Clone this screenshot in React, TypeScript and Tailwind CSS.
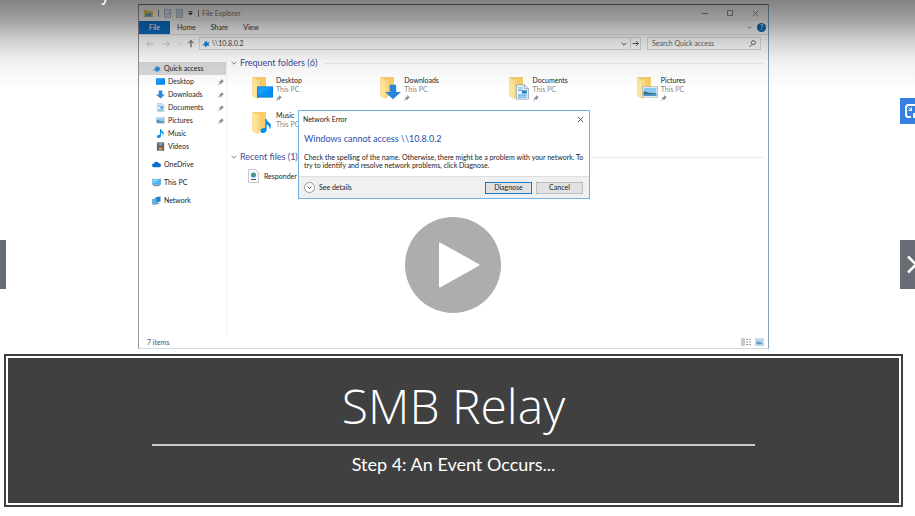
import React from "react";

type Kind = "star" | "desktop" | "downloads" | "documents" | "pictures" | "music" | "videos" | "onedrive" | "pc" | "network";

function Glyph({ kind, className }: { kind: Kind; className: string }) {
  return (
    <svg viewBox="0 0 20 20" className={className} aria-hidden="true">
      {kind === "star" && <path d="M11 1l2 5 6-1-3 5 3 5-6-1-4 5-2-5-7-1 6-4 0-5 4 1z" fill="#1f8be0" />}
      {kind === "desktop" && (
        <>
          <rect x="0" y="3" width="20" height="14" fill="#0a7bd8" />
          <path d="M1 4h18L1 15z" fill="#18a0ff" />
          <path d="M19 4v12H1v-1z" fill="#0990f5" />
        </>
      )}
      {kind === "downloads" && <path d="M6 1h8v9h6L10 19 0 10h6z" fill="#2a86da" />}
      {kind === "documents" && (
        <>
          <path d="M3 1h10l5 5v13H3z" fill="#eef6fc" stroke="#8aa0b2" />
          <path d="M13 1v5h5" fill="none" stroke="#8aa0b2" />
          <path d="M5 5h6M5 8h6M5 14h11M5 16.500h11" stroke="#55a7dc" strokeWidth="1.500" />
          <rect x="10" y="8" width="6" height="4" fill="#2983c2" />
        </>
      )}
      {kind === "pictures" && (
        <>
          <rect x="0.500" y="3.500" width="19" height="13" fill="#f4f8fb" stroke="#a3b2bf" />
          <rect x="2" y="5" width="16" height="10" fill="#8cc8f2" />
          <path d="M2 9l7 2 9 1v1H2z" fill="#3b6d65" />
          <path d="M2 12.500h16V15H2z" fill="#4b94cd" />
        </>
      )}
      {kind === "music" && (
        <path d="M9 0h2c0 5 7 5 6 11-.5 2-1.500 3-2 4 .5-4-1-6-4-7v7c0 3-2 5-5 5-2 0-4-1-4-3 0-3 4-5 7-4z" fill="#078eea" />
      )}
      {kind === "videos" && (
        <>
          <rect x="2" y="1" width="16" height="18" fill="#43464d" />
          <path d="M6 2h8v7H6z" fill="#8b98aa" />
          <path d="M6 11h8v7H6z" fill="#c98c4b" />
          <path d="M4 2v16M16 2v16" stroke="#ccd0d5" strokeWidth="1.500" strokeDasharray="2 2" />
        </>
      )}
      {kind === "onedrive" && <path d="M4 16a4 4 0 0 1 0-8 6 6 0 0 1 11-1 4.500 4.500 0 0 1 1 9z" fill="#0870c8" />}
      {kind === "pc" && (
        <>
          <rect x="0.500" y="2.500" width="19" height="12" fill="#48b5f1" stroke="#5583a5" />
          <path d="M1 3h16L1 12z" fill="#8bd3f8" />
          <path d="M3 17h14" stroke="#56798f" strokeWidth="2" />
        </>
      )}
      {kind === "network" && (
        <>
          <path d="M8 3l11-2v11L8 15z" fill="#2583c9" />
          <path d="M1 8l10-3v10L1 18z" fill="#58b4ea" stroke="#2872aa" />
          <path d="M4 19l12-3" stroke="#477aa0" strokeWidth="2" />
        </>
      )}
    </svg>
  );
}

function Pin() {
  return (
    <svg viewBox="0 0 12 12" className="h-[6px] w-[6px] shrink-0" aria-hidden="true">
      <path d="M7 0l5 5-2 .5-2 2-.5 3L5 8.500.5 12 0 11.500 3.500 7 1.500 5l3-.5 2-2z" fill="#87919b" />
    </svg>
  );
}

function Chevron({ className }: { className: string }) {
  return (
    <svg viewBox="0 0 10 6" className={className} fill="none" stroke="currentColor" strokeWidth="1.500" aria-hidden="true">
      <path d="M1 1l4 4 4-4" />
    </svg>
  );
}

function Arrow({ className }: { className: string }) {
  return (
    <svg viewBox="0 0 12 12" className={className} fill="none" stroke="currentColor" strokeWidth="1.500" aria-hidden="true">
      <path d="M1 6h10M7 2l4 4-4 4" />
    </svg>
  );
}

const places: { name: string; kind: Kind; pinned?: boolean }[] = [
  { name: "Desktop", kind: "desktop", pinned: true },
  { name: "Downloads", kind: "downloads", pinned: true },
  { name: "Documents", kind: "documents", pinned: true },
  { name: "Pictures", kind: "pictures", pinned: true },
  { name: "Music", kind: "music" },
  { name: "Videos", kind: "videos" },
];

const roots: { name: string; kind: Kind }[] = [
  { name: "OneDrive", kind: "onedrive" },
  { name: "This PC", kind: "pc" },
  { name: "Network", kind: "network" },
];

function Sidebar() {
  return (
    <nav className="w-[88px] shrink-0 border-r border-[#f4f4f4] pt-[10px]">
      <button className="flex h-[13px] w-full items-center gap-[3px] bg-[#d9d9d9] pl-[14px]">
        <Glyph kind="star" className="h-2 w-2" />
        Quick access
      </button>
      {places.map((p) => (
        <button key={p.name} className="flex h-[13px] w-full items-center gap-[3px] pr-[2px] pl-[17px]">
          <Glyph kind={p.kind} className="h-[9px] w-[9px]" />
          <span className="flex-1 text-left">{p.name}</span>
          {p.pinned && <Pin />}
        </button>
      ))}
      <div className="pt-[2px]">
        {roots.map((r) => (
          <button key={r.name} className="flex h-[18px] w-full items-center gap-[3px] pl-[13px]">
            <Glyph kind={r.kind} className="h-[9px] w-[9px]" />
            {r.name}
          </button>
        ))}
      </div>
    </nav>
  );
}

function FolderIcon({ kind }: { kind: Kind }) {
  return (
    <span className="relative h-6 w-[22px] shrink-0">
      <svg viewBox="0 0 22 24" className="h-6 w-[22px]" aria-hidden="true">
        <path d="M1 1h14v19H1z" fill="#f7cd6c" />
        <path d="M1 1l5 3v19l-5-3z" fill="#ffe39b" />
        <path d="M6 4h3v17l-3 2z" fill="#f9d980" />
      </svg>
      <span className="absolute right-0 bottom-0 flex">
        <Glyph kind={kind} className={kind === "music" ? "h-[18px] w-[14px]" : "h-4 w-4"} />
      </span>
    </span>
  );
}

function Section({ title }: { title: string }) {
  return (
    <h2 className="flex h-3 items-center gap-[3px] pr-1 pl-1 text-[9px] leading-3 text-[#3a4d99]">
      <Chevron className="h-[4px] w-[6px] text-[#777]" />
      {title}
      <span className="ml-1 h-px flex-1 bg-[#ececec]" />
    </h2>
  );
}

function ErrorDialog() {
  return (
    <section
      role="dialog"
      aria-label="Network Error"
      className="absolute top-[105px] left-[159px] w-[292px] border border-[#71b2e5] bg-white text-[#222]"
    >
      <div className="flex h-4 items-center justify-between pr-[5px] pl-1">
        <span>Network Error</span>
        <button aria-label="Close">
          <svg viewBox="0 0 8 8" className="h-[7px] w-[7px]" stroke="#444">
            <path d="M1 1l6 6M7 1L1 7" />
          </svg>
        </button>
      </div>
      <h3 className="mt-[6px] pl-[5px] text-[9px] leading-3 text-[#1f4fae]">Windows cannot access \\10.8.0.2</h3>
      <p className="mt-[8px] h-[23px] px-[5px] leading-[8px] whitespace-nowrap">
        Check the spelling of the name. Otherwise, there might be a problem with your network. To
        <br />
        try to identify and resolve network problems, click Diagnose.
      </p>
      <div className="flex h-[22px] items-center gap-1 border-t border-[#dfdfdf] bg-[#f0f0f0] pr-[6px] pl-[5px]">
        <button className="mr-auto flex items-center gap-[4px]">
          <span className="flex h-[11px] w-[11px] items-center justify-center rounded-full border border-[#999] bg-white">
            <Chevron className="h-[3px] w-[5px]" />
          </span>
          See details
        </button>
        <button className="h-3 w-[47px] border border-[#1878ce] bg-[#e1e1e1] leading-[9px]">Diagnose</button>
        <button className="h-3 w-[47px] border border-[#bdbdbd] bg-[#e1e1e1] leading-[9px]">Cancel</button>
      </div>
    </section>
  );
}

function Explorer() {
  return (
    <div className="relative mx-auto w-[70.2%] border border-t-[#777] border-r-[#86a5bd] border-b-[#d5dde4] border-l-[#929297] bg-white font-['Lato','Noto_Sans',sans-serif] text-[7px] leading-[9px] text-[#222]">
      <header className="flex h-4 items-center gap-[5px] bg-[#fafafa] pr-[9px] pl-[5px]">
        <svg viewBox="0 0 10 10" className="h-[9px] w-[9px]" aria-hidden="true">
          <path d="M0 1h4l1 1h5v7H0z" fill="#efca5c" />
          <path d="M2 5h6v4H6V7H4v2H2z" fill="#3d9fd8" />
        </svg>
        <span className="h-[7px] w-px bg-[#888]" />
        <svg viewBox="0 0 8 10" className="h-[9px] w-[7px]" fill="#e6ebf5" stroke="#a3b3d0" aria-hidden="true">
          <path d="M.5.5h7v9h-7z" />
          <path d="M2 5l2 2 3-4" fill="none" />
        </svg>
        <span className="h-[9px] w-[7px] border border-[#b9c4d8] bg-[#ced7e7]" />
        <svg viewBox="0 0 6 6" className="h-[5px] w-[5px]" aria-hidden="true">
          <path d="M1 0h4v1H1zM0 2h6L3 5z" fill="#333" />
        </svg>
        <span className="h-[7px] w-px bg-[#888]" />
        <span className="-ml-[2px] text-[#777]">File Explorer</span>
        <div className="ml-auto flex items-center gap-[19px] text-[#888]">
          <button aria-label="Minimize" className="h-px w-[6px] bg-[#888]" />
          <button aria-label="Maximize" className="h-[6px] w-[6px] border border-[#999]" />
          <button aria-label="Close window">
            <svg viewBox="0 0 8 8" className="h-[7px] w-[7px]" stroke="currentColor">
              <path d="M1 1l6 6M7 1L1 7" />
            </svg>
          </button>
        </div>
      </header>
      <div className="flex h-[13px] items-center bg-white text-[#333]">
        <button className="h-[13px] w-[31px] bg-[#0b70c9] text-white">File</button>
        <button className="w-[33px]">Home</button>
        <button className="w-[33px]">Share</button>
        <button className="w-[30px]">View</button>
        <Chevron className="ml-auto h-[3px] w-[5px] text-[#777]" />
        <button aria-label="Help" className="mx-[2px] ml-[5px] h-[9px] w-[9px] rounded-full bg-[#0b6fc4] text-center leading-[9px] text-white">?</button>
      </div>
      <div className="flex h-[18px] items-center border-t border-[#e2e2e2] pr-[7px] pl-[7px] text-[#444]">
        <Arrow className="h-2 w-2 rotate-180 text-[#ccc]" />
        <Arrow className="ml-[8px] h-2 w-2 text-[#ccc]" />
        <Chevron className="ml-[8px] h-[3px] w-[4px] text-[#bbb]" />
        <Arrow className="ml-[5px] h-2 w-2 -rotate-90" />
        <div className="ml-[4px] flex h-[13px] flex-1 items-center border border-[#dcdcdc] pl-[2px]">
          <Glyph kind="star" className="h-2 w-2" />
          <input aria-label="Address" defaultValue="\\10.8.0.2" className="ml-[2px] min-w-0 flex-1 bg-transparent outline-none" />
          <Chevron className="mr-[3px] h-[4px] w-[6px]" />
          <span className="flex h-[11px] items-center border-l border-[#dcdcdc] px-[1px]">
            <Arrow className="h-[7px] w-[7px]" />
          </span>
        </div>
        <div className="ml-[6px] flex h-[13px] w-[114px] items-center border border-[#dcdcdc] pr-[4px] pl-1">
          <input aria-label="Search" placeholder="Search Quick access" className="min-w-0 flex-1 bg-transparent outline-none placeholder:text-[#666]" />
          <svg viewBox="0 0 8 8" className="h-[7px] w-[7px]" fill="none" stroke="#555" aria-hidden="true">
            <circle cx="5" cy="3" r="2.300" />
            <path d="M3.500 5L.5 8" />
          </svg>
        </div>
      </div>
      <div className="flex min-h-[284px]">
        <Sidebar />
        <main className="min-w-0 flex-1 pt-[5px]">
          <Section title="Frequent folders (6)" />
          <div className="grid grid-cols-4 pt-[7px] pr-1 pl-6">
            {(["Desktop", "Downloads", "Documents", "Pictures", "Music"] as const).map((name) => (
              <button key={name} className="flex h-[35px] items-start gap-[3px] text-left">
                <FolderIcon kind={name.toLowerCase() as Kind} />
                <span className="flex flex-col">
                  <span>{name}</span>
                  <span className="text-[#888]">This PC</span>
                  {name !== "Music" && (
                    <span className="pt-[1px]">
                      <Pin />
                    </span>
                  )}
                </span>
              </button>
            ))}
          </div>
          <div className="pt-[5px]">
            <Section title="Recent files (1)" />
          </div>
          <button className="mt-[6px] ml-[21px] flex items-center gap-[5px]">
            <svg viewBox="0 0 11 14" className="h-[14px] w-[11px]" aria-hidden="true">
              <path d="M.5.500h7l3 3v10H.5z" fill="#fafafa" stroke="#c8c8c8" />
              <circle cx="5.500" cy="6" r="2.500" fill="#2388b5" />
              <path d="M4 5l2-1 1 2-2 2z" fill="#51a66d" />
              <path d="M3 10.500h5" stroke="#555" />
            </svg>
            Responder
          </button>
        </main>
      </div>
      <footer className="flex h-3 items-center pr-1 pl-[8px] text-[#4c5573]">
        7 items
        <svg viewBox="0 0 10 8" className="ml-auto h-[8px] w-[10px]" stroke="#999" aria-hidden="true">
          <path d="M1 0v8M3 0v8M5 1.500h2M8 1.500h2M5 4h2M8 4h2M5 6.500h2M8 6.500h2" />
        </svg>
        <span className="ml-[4px] flex h-[8px] w-[9px] items-center justify-center bg-[#c9dcec]">
          <Glyph kind="pictures" className="h-[7px] w-[7px]" />
        </span>
      </footer>
      <ErrorDialog />
    </div>
  );
}

export default function App() {
  return (
    <div className="relative min-h-screen overflow-hidden bg-white">
      <article className="relative pt-1 pr-3 pl-1">
        <Explorer />
        <div className="mt-[5px] border-2 border-[#404040] bg-white p-[2px]">
          <div className="flex h-[145px] flex-col items-center bg-[#404040] text-white">
            <h1 className="flex h-[86px] items-end pb-[2px] font-['Open_Sans','Noto_Sans',sans-serif] text-[48px] leading-[72px] font-light">SMB Relay</h1>
            <div className="h-[2px] w-[67.7%] bg-[#c5cbc6]" />
            <p className="mt-[6px] font-['Lato',sans-serif] text-[18px] leading-6">Step 4: An Event Occurs...</p>
          </div>
        </div>
        <button
          aria-label="Play video"
          className="absolute top-[217px] left-[405px] flex h-24 w-24 items-center justify-center rounded-full bg-[#adadad]"
        >
          <svg viewBox="0 0 96 96" className="h-24 w-24">
            <path d="M35 26.500v43L73.500 48z" fill="white" stroke="white" strokeWidth="2" strokeLinejoin="round" />
          </svg>
        </button>
      </article>
      <div className="pointer-events-none absolute inset-x-0 top-0 h-[90px] bg-[linear-gradient(to_bottom,rgba(0,0,0,0.49)_0px,rgba(0,0,0,0.37)_20px,rgba(0,0,0,0.19)_40px,rgba(0,0,0,0.06)_60px,rgba(0,0,0,0)_90px)]" />
      <span className="absolute -top-[14px] left-[101px] font-['Roboto',sans-serif] text-[18px] leading-[18px] text-white">y</span>
      <button aria-label="Picture in picture" className="absolute top-[98px] right-0 h-[26px] w-[15px] overflow-hidden bg-[#3580e3]">
        <svg viewBox="0 0 15 26" className="h-[26px] w-[15px]" fill="none" stroke="white" strokeWidth="2">
          <path d="M11 19H8.500Q6 19 6 16.500V9.500Q6 7 8.500 7H15" />
          <path d="M8.500 9.500l3 3m0-3v3h-3" strokeWidth="1" />
          <path d="M13.500 15.500h2v4h-2z" fill="white" strokeWidth="1" />
        </svg>
      </button>
      <button aria-label="Previous" className="absolute top-[240px] left-0 h-[49px] w-[6px] bg-[#686d75]" />
      <button aria-label="Next" className="absolute top-[240px] right-0 h-[49px] w-[15px] overflow-hidden bg-[#686d75]">
        <svg viewBox="0 0 15 49" className="h-[49px] w-[15px]" fill="none" stroke="white" strokeWidth="2.500">
          <path d="M8 16.500l8 8-8 8" />
        </svg>
      </button>
    </div>
  );
}
